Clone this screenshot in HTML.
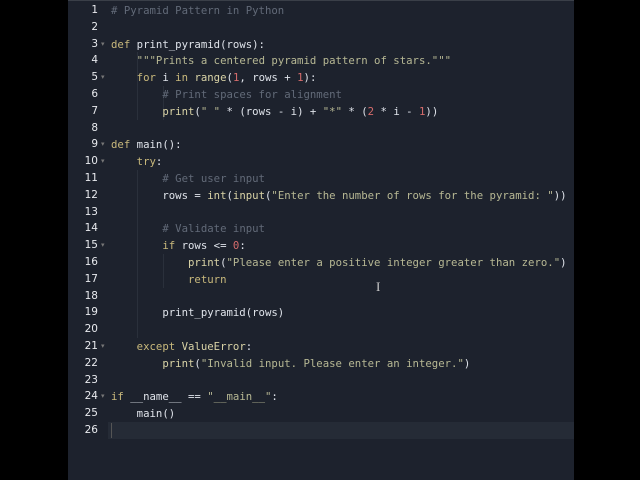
<!DOCTYPE html>
<html><head><style>
html,body{margin:0;padding:0;background:#000;width:640px;height:480px;overflow:hidden}
#ed{position:absolute;left:68px;top:0;width:506px;height:480px;background:#1d222d;border-top:1px solid #3a3f48;box-sizing:border-box}
.l{position:absolute;left:0;height:17px;line-height:17px;font-family:"DejaVu Sans Mono",monospace;font-size:10.67px;white-space:pre;color:#dfe3ea}
.n{position:absolute;width:30px;text-align:right;left:68px;font-family:"DejaVu Sans",sans-serif;font-size:10.5px;color:#e8eaee;height:17px;line-height:17px}
.f{position:absolute;left:101px;font-size:7px;color:#777;height:17px;line-height:17px;font-family:"Liberation Sans",sans-serif}
.k{color:#c9b97c}.b{color:#d9d3a6}.s{color:#b7b894}.c{color:#626a78}.d{color:#d56c6c}
#act{position:absolute;left:108px;top:422px;width:466px;height:17px;background:#252b36}
#cur{position:absolute;left:111px;top:423px;width:1px;height:15px;background:#555}
.g{position:absolute;width:1px;background:#2a303b}
</style></head><body>
<div id="ed"></div>
<div id="act"></div><div id="cur"></div>
<div class="g" style="left:137px;top:52px;height:68px"></div>
<div class="g" style="left:163px;top:86px;height:34px"></div>
<div class="g" style="left:137px;top:170px;height:168px"></div>
<div class="g" style="left:163px;top:254px;height:34px"></div>
<div class="n" style="top:2px">1</div>
<div class="n" style="top:19px">2</div>
<div class="n" style="top:36px">3</div><div class="f" style="top:36px">▾</div>
<div class="n" style="top:52px">4</div>
<div class="n" style="top:69px">5</div><div class="f" style="top:69px">▾</div>
<div class="n" style="top:86px">6</div>
<div class="n" style="top:103px">7</div>
<div class="n" style="top:120px">8</div>
<div class="n" style="top:136px">9</div><div class="f" style="top:136px">▾</div>
<div class="n" style="top:153px">10</div><div class="f" style="top:153px">▾</div>
<div class="n" style="top:170px">11</div>
<div class="n" style="top:187px">12</div>
<div class="n" style="top:204px">13</div>
<div class="n" style="top:220px">14</div>
<div class="n" style="top:237px">15</div><div class="f" style="top:237px">▾</div>
<div class="n" style="top:254px">16</div>
<div class="n" style="top:271px">17</div>
<div class="n" style="top:288px">18</div>
<div class="n" style="top:304px">19</div>
<div class="n" style="top:321px">20</div>
<div class="n" style="top:338px">21</div><div class="f" style="top:338px">▾</div>
<div class="n" style="top:355px">22</div>
<div class="n" style="top:372px">23</div>
<div class="n" style="top:388px">24</div><div class="f" style="top:388px">▾</div>
<div class="n" style="top:405px">25</div>
<div class="n" style="top:422px">26</div>
<div style="position:absolute;left:111px;top:0">
<div class="l" style="top:2px"><span class="c"># Pyramid Pattern in Python</span></div>
<div class="l" style="top:36px"><span class="k">def</span> print_pyramid(rows):</div>
<div class="l" style="top:52px">    <span class="s">"""Prints a centered pyramid pattern of stars."""</span></div>
<div class="l" style="top:69px">    <span class="k">for</span> i <span class="k">in</span> <span class="b">range</span>(<span class="d">1</span>, rows + <span class="d">1</span>):</div>
<div class="l" style="top:86px">        <span class="c"># Print spaces for alignment</span></div>
<div class="l" style="top:103px">        <span class="b">print</span>(<span class="s">" "</span> * (rows - i) + <span class="s">"*"</span> * (<span class="d">2</span> * i - <span class="d">1</span>))</div>
<div class="l" style="top:136px"><span class="k">def</span> main():</div>
<div class="l" style="top:153px">    <span class="k">try</span>:</div>
<div class="l" style="top:170px">        <span class="c"># Get user input</span></div>
<div class="l" style="top:187px">        rows = <span class="b">int</span>(<span class="b">input</span>(<span class="s">"Enter the number of rows for the pyramid: "</span>))</div>
<div class="l" style="top:220px">        <span class="c"># Validate input</span></div>
<div class="l" style="top:237px">        <span class="k">if</span> rows &lt;= <span class="d">0</span>:</div>
<div class="l" style="top:254px">            <span class="b">print</span>(<span class="s">"Please enter a positive integer greater than zero."</span>)</div>
<div class="l" style="top:271px">            <span class="k">return</span></div>
<div class="l" style="top:304px">        print_pyramid(rows)</div>
<div class="l" style="top:338px">    <span class="k">except</span> <span class="b">ValueError</span>:</div>
<div class="l" style="top:355px">        <span class="b">print</span>(<span class="s">"Invalid input. Please enter an integer."</span>)</div>
<div class="l" style="top:388px"><span class="k">if</span> __name__ == <span class="s">"__main__"</span>:</div>
<div class="l" style="top:405px">    main()</div>
</div>
<div style="position:absolute;left:376px;top:279px;color:#ccc;font-family:'Liberation Serif',serif;font-size:13px">I</div>
</body></html>
